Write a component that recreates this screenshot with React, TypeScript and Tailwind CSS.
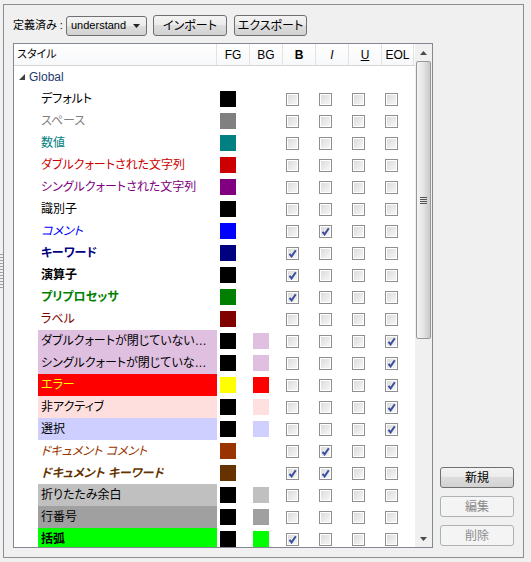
import type { ReactNode } from 'react';

type Row = {
  name: string;
  fg: string;
  bg?: string;
  cls: string;
  cellBg?: string;
  b?: boolean;
  i?: boolean;
  u?: boolean;
  eol?: boolean;
};

const rows: Row[] = [
  { name: 'デフォルト', fg: '#000000', cls: 'text-black' },
  { name: 'スペース', fg: '#808080', cls: 'text-[#808080]' },
  { name: '数値', fg: '#008080', cls: 'text-[#008080]' },
  { name: 'ダブルクォートされた文字列', fg: '#cc0000', cls: 'text-[#cc0000]' },
  { name: 'シングルクォートされた文字列', fg: '#800080', cls: 'text-[#800080]' },
  { name: '識別子', fg: '#000000', cls: 'text-black' },
  { name: 'コメント', fg: '#0000ff', cls: 'text-[#0000ff] italic', i: true },
  { name: 'キーワード', fg: '#000080', cls: 'text-[#000080] font-bold', b: true },
  { name: '演算子', fg: '#000000', cls: 'text-black font-bold', b: true },
  { name: 'プリプロセッサ', fg: '#008000', cls: 'text-[#008000] font-bold', b: true },
  { name: 'ラベル', fg: '#800000', cls: 'text-[#800000]' },
  { name: 'ダブルクォートが閉じていない文字列', fg: '#000000', bg: '#e0c0e0', cls: 'text-black', cellBg: 'bg-[#e0c0e0]', eol: true },
  { name: 'シングルクォートが閉じていない文字列', fg: '#000000', bg: '#e0c0e0', cls: 'text-black', cellBg: 'bg-[#e0c0e0]', eol: true },
  { name: 'エラー', fg: '#ffff00', bg: '#ff0000', cls: 'text-[#ffff00]', cellBg: 'bg-[#ff0000]', eol: true },
  { name: '非アクティブ', fg: '#000000', bg: '#ffe0e0', cls: 'text-black', cellBg: 'bg-[#ffdede]', eol: true },
  { name: '選択', fg: '#000000', bg: '#d0d0ff', cls: 'text-black', cellBg: 'bg-[#cfcfff]', eol: true },
  { name: 'ドキュメント コメント', fg: '#993300', cls: 'text-[#993300] italic', i: true },
  { name: 'ドキュメント キーワード', fg: '#663300', cls: 'text-[#663300] italic font-bold', b: true, i: true },
  { name: '折りたたみ余白', fg: '#000000', bg: '#c0c0c0', cls: 'text-black', cellBg: 'bg-[#c0c0c0]' },
  { name: '行番号', fg: '#000000', bg: '#a0a0a0', cls: 'text-black', cellBg: 'bg-[#a0a0a0]' },
  { name: '括弧', fg: '#000000', bg: '#00ff00', cls: 'text-black font-bold', cellBg: 'bg-[#00ff00]', b: true },
];

function Check({ on }: { on?: boolean }) {
  return (
    <div className="ml-[4px] h-[13px] w-[13px] border border-[#8f8f8f] bg-white p-px">
      <div className="relative h-full w-full bg-[linear-gradient(135deg,#dcdcdc,#f6f6f6)]">
        {on ? (
          <svg viewBox="0 0 9 9" className="absolute inset-0 h-[9px] w-[9px]">
            <path d="M1.5 4.8 L3.6 7.4 L7.8 1.2" fill="none" stroke="#3c4f9e" strokeWidth="2" />
          </svg>
        ) : null}
      </div>
    </div>
  );
}

function Btn({ children, className = '', disabled }: { children: ReactNode; className?: string; disabled?: boolean }) {
  const look = disabled
    ? 'border-[#adb2b5] bg-[#f4f4f4] text-[#8b8b8b]'
    : 'border-[#707070] bg-[linear-gradient(#f3f3f3,#ebebeb_50%,#dddddd_50%,#d2d2d2)] text-black';
  return (
    <div className={`flex h-[21px] items-center justify-center whitespace-nowrap rounded-[3px] border text-[12px] ${look} ${className}`}>
      {children}
    </div>
  );
}

function Arrow({ up }: { up?: boolean }) {
  return (
    <div className="flex h-[17px] items-center justify-center">
      <svg viewBox="0 0 7 4" className="h-[4px] w-[7px]">
        <path d={up ? 'M0 4 L3.5 0 L7 4 Z' : 'M0 0 L7 0 L3.5 4 Z'} fill="#4a4a4a" />
      </svg>
    </div>
  );
}

export default function App() {
  return (
    <div className="flex h-[562px] w-[531px] overflow-hidden bg-[#f0f0f0] font-['Liberation_Sans','Noto_Sans_CJK_JP',sans-serif] [font-feature-settings:'palt']">
      <div className="flex w-[3px] flex-col justify-center gap-[2px] pb-[20px]">
        {Array.from({ length: 12 }).map((_, k) => (
          <div key={k} className="h-px w-[3px] bg-[#a0a0a0]" />
        ))}
      </div>
      <div className="mt-[4px] flex h-[554px] w-[521px] border border-[#8c8e94] pb-[9px] pl-[9px] pt-[10px]">
        <div className="flex w-[420px] flex-col">
          <div className="flex h-[21px] items-center text-[12px]">
            <span className="w-[53px] whitespace-nowrap text-[11px] text-black">定義済み :</span>
            <div className="flex h-[20px] w-[81px] items-center justify-between rounded-[3px] border border-[#707070] bg-[linear-gradient(#f3f3f3,#ebebeb_50%,#dddddd_50%,#d2d2d2)] pl-[4px] pr-[6px] text-[11px]">
              <span>understand</span>
              <svg viewBox="0 0 7 4" className="h-[4px] w-[7px]">
                <path d="M0 0 L7 0 L3.5 4 Z" fill="#222" />
              </svg>
            </div>
            <Btn className="ml-[6px] w-[74px] text-[11px]">インポート</Btn>
            <Btn className="ml-[7px] w-[73px] text-[11px]">エクスポート</Btn>
          </div>
          <div className="mt-[7px] flex h-[505px] border border-[#828790] bg-white">
            <div className="flex-1 overflow-hidden">
              <div className="flex h-[22px] items-center border-b border-[#d5d5d5] bg-[linear-gradient(#ffffff,#f7f8fa)] text-[12px] text-black">
                <div className="w-[202px] pl-[3px] text-[11px]">スタイル</div>
                <div className="flex h-full w-[33px] items-center justify-center border-l border-[#e3e3e3]">FG</div>
                <div className="flex h-full w-[33px] items-center justify-center border-l border-[#e3e3e3]">BG</div>
                <div className="flex h-full w-[33px] items-center justify-center border-l border-[#e3e3e3] font-bold">B</div>
                <div className="flex h-full w-[33px] items-center justify-center border-l border-[#e3e3e3] italic">I</div>
                <div className="flex h-full w-[33px] items-center justify-center border-l border-[#e3e3e3] underline">U</div>
                <div className="flex h-full w-[33px] items-center justify-center border-x border-[#e3e3e3]">EOL</div>
              </div>
              <div className="flex h-[22px] items-center pl-[5px] text-[12px] text-[#1e3a6e]">
                <svg viewBox="0 0 6 6" className="h-[6px] w-[6px]">
                  <path d="M6 0 L6 6 L0 6 Z" fill="#404040" />
                </svg>
                <span className="ml-[4px]">Global</span>
              </div>
              {rows.map((r) => (
                <div key={r.name} className="flex h-[22px] items-stretch">
                  <div className="w-[24px]" />
                  <div className={`flex w-[179px] items-center overflow-hidden px-[3px] text-[12px] ${r.cellBg ?? ''}`}>
                    <span className={`truncate ${r.cls}`}>{r.name}</span>
                  </div>
                  <div className="flex w-[32px] items-center">
                    <div className="ml-[3px] h-[16px] w-[16px]" style={{ backgroundColor: r.fg }} />
                  </div>
                  <div className="flex w-[33px] items-center">
                    {r.bg ? <div className="ml-[4px] h-[16px] w-[16px]" style={{ backgroundColor: r.bg }} /> : null}
                  </div>
                  <div className="flex w-[33px] items-center"><Check on={r.b} /></div>
                  <div className="flex w-[33px] items-center"><Check on={r.i} /></div>
                  <div className="flex w-[33px] items-center"><Check on={r.u} /></div>
                  <div className="flex w-[33px] items-center"><Check on={r.eol} /></div>
                </div>
              ))}
            </div>
            <div className="flex w-[17px] flex-col bg-[#f0f0f0]">
              <Arrow up />
              <div className="ml-[1px] flex h-[278px] w-[15px] items-center justify-center rounded-[2px] border border-[#999999] bg-[linear-gradient(90deg,#f4f4f4,#e6e6e6_45%,#c9c9ce)]">
                <div className="flex flex-col gap-px">
                  {[0, 1, 2, 3].map((k) => (
                    <div key={k} className="h-px w-[7px] bg-[#555]" />
                  ))}
                </div>
              </div>
              <div className="flex-1" />
              <Arrow />
            </div>
          </div>
        </div>
        <div className="ml-[7px] flex w-[74px] flex-col justify-end gap-[8px] pb-[2px]">
          <Btn className="border-[#4a4a4a]">新規</Btn>
          <Btn disabled>編集</Btn>
          <Btn disabled>削除</Btn>
        </div>
      </div>
    </div>
  );
}
